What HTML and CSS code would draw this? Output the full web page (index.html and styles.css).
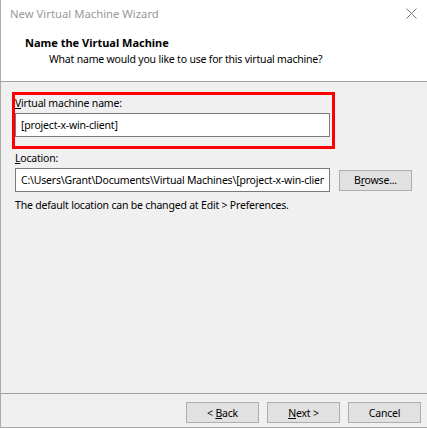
FILE: index.html
```html
<!DOCTYPE html>
<html lang="en">
<head>
  <meta charset="UTF-8" />
  <title>New Virtual Machine Wizard</title>
  <link rel="stylesheet" href="styles.css">
</head>
<body>

  <div class="window">
    <div class="top">
      <div class="titlebar">
        <span class="title">New Virtual Machine Wizard</span>
        <svg class="close" width="11" height="11" viewBox="0 0 11 11">
          <path d="M0.5 0.5 L10.5 10.5 M10.5 0.5 L0.5 10.5" stroke="#777" stroke-width="1" fill="none" />
        </svg>
      </div>
      <div class="header">
        <div class="heading">Name the Virtual Machine</div>
        <div class="subheading">What name would you like to use for this virtual machine?</div>
      </div>
    </div>

    <div class="content">
      <div class="highlight">
        <label class="label"><u>V</u>irtual machine name:</label>
        <input class="field name-field" type="text" value="[project-x-win-client]" />
      </div>

      <label class="label"><u>L</u>ocation:</label>
      <div class="location-row">
        <input class="field location-field" type="text" value="C:\Users\Grant\Documents\Virtual Machines\[project-x-win-client]" />
        <button class="btn browse">B<u>r</u>owse...</button>
      </div>
      <p class="hint">The default location can be changed at Edit &gt; Preferences.</p>
    </div>

    <div class="footer">
      <button class="btn">&lt; <u>B</u>ack</button>
      <button class="btn"><u>N</u>ext &gt;</button>
      <button class="btn">Cancel</button>
    </div>
  </div>

</body>
</html>
```

FILE: styles.css
```css
body {
  margin: 0;
  background-color: #fff;
  font-family: "Noto Sans", "Liberation Sans", sans-serif;
  font-size: 10.5px;
  letter-spacing: -0.2px;
  color: #000;
}

.window {
  width: 426px;
  height: 427px;
  border-left: 1px solid #aaa;
  border-bottom: 1px solid #aaa;
  display: flex;
  flex-direction: column;
  background-color: #f0f0f0;
}

.top {
  background-color: #fff;
  height: 81px;
  border-bottom: 1px solid #a0a0a0;
}

.titlebar {
  height: 28px;
  display: flex;
  align-items: center;
  justify-content: space-between;
  padding: 0 10px 0 9px;
}

.title {
  color: #999;
  font-size: 11.3px;
  letter-spacing: 0;
  margin-top: -1px;
}

.close {
  margin-top: -2px;
}

.header {
  padding-left: 24px;
  padding-top: 7px;
}

.heading {
  font-weight: bold;
  font-size: 11px;
  letter-spacing: 0;
  line-height: 16px;
}

.subheading {
  padding-left: 24px;
  line-height: 16px;
}

.content {
  flex: 1;
  padding: 10px 0 0 11px;
}

.highlight {
  width: 317px;
  border: 3px solid #f00;
  padding: 0 0 9px 0;
  display: flex;
  flex-direction: column;
}

.label {
  display: block;
  line-height: 16px;
  padding: 0 0 0 3px;
}

.highlight .label {
  padding-left: 0;
  margin-bottom: 2px;
}

.content > .label {
  margin-top: 1px;
  margin-bottom: 2px;
}

.field {
  box-sizing: border-box;
  height: 24px;
  border: 1px solid #7a7a7a;
  background-color: #fff;
  font-family: inherit;
  font-size: 10.5px;
  letter-spacing: -0.2px;
  padding: 0 5px;
  margin: 0;
  color: #000;
  outline: none;
}

.name-field {
  width: 315px;
}

.location-row {
  display: flex;
  align-items: center;
  gap: 9px;
  padding-left: 3px;
}

.location-field {
  width: 315px;
}

.btn {
  box-sizing: border-box;
  width: 73px;
  height: 21px;
  border: 1px solid #adadad;
  background-color: #e1e1e1;
  font-family: inherit;
  font-size: 10.5px;
  letter-spacing: -0.2px;
  padding: 0;
  color: #000;
}

.hint {
  margin: 5px 0 0 3px;
  line-height: 16px;
}

.footer {
  height: 34px;
  border-top: 1px solid #a0a0a0;
  display: flex;
  justify-content: flex-end;
  align-items: flex-start;
  gap: 8px;
  padding: 8px 6px 0 0;
  box-sizing: border-box;
}
```
